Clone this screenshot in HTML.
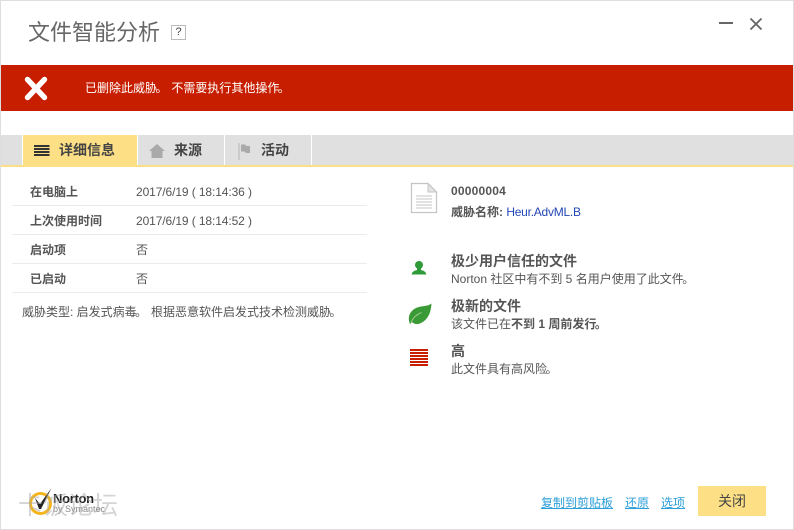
<!DOCTYPE html>
<html lang="zh"><head><meta charset="utf-8"><style>
html,body{margin:0;padding:0;background:#fff}
#p{position:relative;width:794px;height:530px;overflow:hidden;background:#fff;font-family:"Liberation Sans","Noto Sans CJK SC",sans-serif;font-size:12px;color:#555}
#p div,#p svg{position:absolute}
.t{white-space:nowrap;line-height:16px}
.b{font-weight:700}
.ln{left:12px;width:355px;height:1px;background:#ebebeb}
.h{font-size:14px;font-weight:700;color:#555}
.d{margin-left:-1.5px}
.dm{margin-left:-1.5px;margin-right:.5px}
.dt{letter-spacing:-.1px}
</style></head><body><div id="p">
<div style="left:0;top:0;width:792px;height:528px;border:1px solid #dedede"></div>
<div class="t" style="left:28px;top:17px;font-size:22px;line-height:32px;color:#666">文件智能分析</div>
<div class="t" style="left:171px;top:25px;width:13px;height:13px;border:1px solid #bbb;font-size:11px;line-height:13px;text-align:center;color:#444">?</div>
<div style="left:719px;top:22px;width:14px;height:2px;background:#666"></div>
<svg style="left:749px;top:17px" width="14" height="14" viewBox="0 0 14 14"><path d="M1.5 1.5L12.5 12.5M12.5 1.5L1.5 12.5" stroke="#666" stroke-width="1.8" fill="none"/></svg>
<div style="left:1px;top:65px;width:792px;height:46px;background:#c81e00"></div>
<svg style="left:24px;top:76px" width="24" height="25" viewBox="0 0 24 25"><path d="M3.5 3.5L20.5 21.5M20.5 3.5L3.5 21.5" stroke="#fff" stroke-width="5.4" stroke-linecap="round" fill="none"/></svg>
<div class="t" style="left:85px;top:80px;color:#fff">已删除此威胁<span class="dm">。</span> 不需要执行其他操作<span class="d">。</span></div>
<div style="left:1px;top:135px;width:792px;height:30px;background:#e0e0e0"></div>
<div style="left:1px;top:165px;width:792px;height:2px;background:#fde085"></div>
<div style="left:23px;top:135px;width:114px;height:32px;background:#fde085"></div>
<div style="left:22px;top:135px;width:1px;height:30px;background:#fff"></div>
<div style="left:137px;top:135px;width:1px;height:30px;background:#fff"></div>
<div style="left:224px;top:135px;width:1px;height:30px;background:#fff"></div>
<div style="left:311px;top:135px;width:1px;height:30px;background:#fff"></div>
<svg style="left:34px;top:145px" width="16" height="11" viewBox="0 0 16 11"><path d="M0 1H15.500M0 4H15.500M0 7H15.500M0 10H15.500" stroke="#333" stroke-width="1.9" fill="none"/></svg>
<div class="t" style="left:59px;top:142px;font-size:14px;font-weight:700;color:#444">详细信息</div>
<svg style="left:149px;top:144px" width="16" height="14" viewBox="0 0 16 14"><path d="M8 0L16 7H13.500V14H2.500V7H0Z" fill="#aaa"/></svg>
<div class="t" style="left:174px;top:142px;font-size:14px;font-weight:700;color:#444">来源</div>
<svg style="left:238px;top:143px" width="14" height="17" viewBox="0 0 14 17"><path d="M1 0V17" stroke="#c4c4c4" stroke-width="1.5"/><path d="M3 1.500H7L8.500 3H12V10H8L6.500 8.500H3Z" fill="#aaa"/></svg>
<div class="t" style="left:261px;top:142px;font-size:14px;font-weight:700;color:#444">活动</div>
<div class="t b" style="left:30px;top:184px">在电脑上</div>
<div class="t dt" style="left:136px;top:184px">2017/6/19 ( 18:14:36 )</div>
<div class="ln" style="top:205px"></div>
<div class="t b" style="left:30px;top:213px">上次使用时间</div>
<div class="t dt" style="left:136px;top:213px">2017/6/19 ( 18:14:52 )</div>
<div class="ln" style="top:234px"></div>
<div class="t b" style="left:30px;top:242px">启动项</div>
<div class="t" style="left:136px;top:242px">否</div>
<div class="ln" style="top:263px"></div>
<div class="t b" style="left:30px;top:271px">已启动</div>
<div class="t" style="left:136px;top:271px">否</div>
<div class="ln" style="top:292px"></div>
<div class="t" style="left:22px;top:304px">威胁类型: 启发式病毒<span class="dm">。</span> 根据恶意软件启发式技术检测威胁<span class="d">。</span></div>
<svg style="left:410px;top:182px" width="28" height="32" viewBox="0 0 28 32"><path d="M1.500 1.500H18L26.500 10V30.500H1.500Z" fill="#fff" stroke="#c4c4c4" stroke-width="1.2"/><path d="M18 1.500V10H26.500Z" fill="#e4e4e4" stroke="#c4c4c4"/><path d="M6 14H22M6 17H22M6 20H22M6 23H22M6 26H22" stroke="#c4c4c4" fill="none"/></svg>
<div class="t b" style="left:451px;top:183px;letter-spacing:.2px">00000004</div>
<div class="t" style="left:451px;top:204px"><b>威胁名称:</b> <span style="color:#2347b5;letter-spacing:-.25px">Heur.AdvML.B</span></div>
<svg style="left:411px;top:260px" width="16" height="15" viewBox="0 0 16 15"><circle cx="8" cy="5" r="4" fill="#2f9a38"/><path d="M6 8H10V10C12 10.600 14.600 11 15.400 14.500H.6C1.400 11 4 10.600 6 10Z" fill="#2f9a38"/></svg>
<div class="t h" style="left:451px;top:253px">极少用户信任的文件</div>
<div class="t" style="left:451px;top:271px">Norton 社区中有不到 5 名用户使用了此文件<span class="d">。</span></div>
<svg style="left:408px;top:303px" width="24" height="22" viewBox="0 0 24 22"><path d="M23.500 .5C23 8 21 16 13 20C9 22 6 21 4 19L2 21C-1 14 2 8 8 5C13 2.500 19 4 23.500 .5Z" fill="#3a9a35"/><path d="M3 19.500C5 14.500 8.500 11.500 13.500 9.500" stroke="#9cc98f" stroke-width="1" fill="none"/></svg>
<div class="t h" style="left:451px;top:298px">极新的文件</div>
<div class="t" style="left:451px;top:316px">该文件已在<b>不到 1 周前发行<span class="d">。</span></b></div>
<svg style="left:410px;top:349px" width="18" height="18" viewBox="0 0 18 18" shape-rendering="crispEdges"><path d="M0 1H18M0 4H18M0 7H18M0 10H18M0 13H18M0 16H18" stroke="#c81e00" stroke-width="2" fill="none"/></svg>
<div class="t h" style="left:451px;top:343px">高</div>
<div class="t" style="left:451px;top:361px">此文件具有高风险<span class="d">。</span></div>
<svg style="left:28px;top:488px" width="26" height="28" viewBox="0 0 26 28"><circle cx="12.500" cy="15.500" r="10" fill="none" stroke="#f5b51e" stroke-width="3"/><path d="M7 10L12 16L23.500 0L13 21H11Z" fill="#222"/></svg>
<div class="t b" style="left:53px;top:491px;font-size:13px;color:#222;letter-spacing:-.3px">Norton</div>
<div class="t" style="left:53px;top:503px;font-size:9px;line-height:12px;color:#888">by Symantec</div>
<div class="t" style="left:18px;top:489px;font-size:25px;line-height:34px;color:rgba(170,170,170,.5)">卡饭论坛</div>
<div class="t" style="left:541px;top:495px;color:#2d9fd9;text-decoration:underline">复制到剪贴板</div>
<div class="t" style="left:625px;top:495px;color:#2d9fd9;text-decoration:underline">还原</div>
<div class="t" style="left:661px;top:495px;color:#2d9fd9;text-decoration:underline">选项</div>
<div class="t" style="left:698px;top:486px;width:68px;height:30px;background:#fde085;color:#444;font-size:14px;line-height:30px;text-align:center">关闭</div>
</div></body></html>
